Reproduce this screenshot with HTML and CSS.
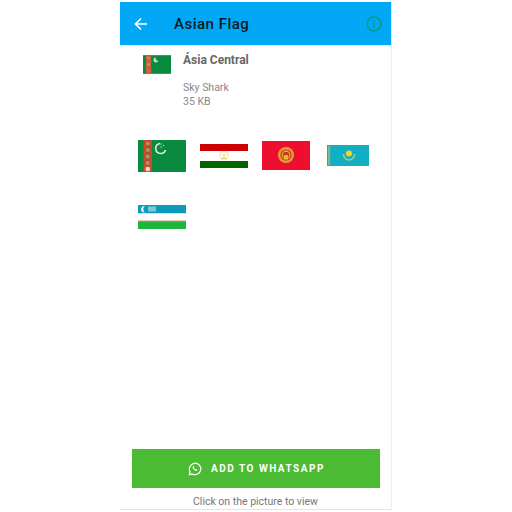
FILE: index.html
```html
<!DOCTYPE html>
<html lang="en">
<head>
    <meta charset="UTF-8">
    <meta name="viewport" content="width=device-width, initial-scale=1.0">
    <title>Asian Flag</title>
    <link rel="stylesheet" href="styles.css">
</head>
<body>
    <div class="phone">
        <header class="appbar">
            <svg class="back" viewBox="0 0 14 14" width="14" height="14">
                <path d="M13 7H2M7 1.5 1.5 7 7 12.5" fill="none" stroke="#fff" stroke-width="1.7"/>
            </svg>
            <h1 class="title">Asian Flag</h1>
            <svg class="info" viewBox="0 0 16 16" width="16" height="16">
                <circle cx="8" cy="8" r="6.9" fill="none" stroke="#0a9a8a" stroke-width="1.5"/>
                <rect x="7.2" y="7" width="1.6" height="4.8" fill="#0a9a8a"/>
                <rect x="7.2" y="4.2" width="1.6" height="1.6" fill="#0a9a8a"/>
            </svg>
        </header>

        <section class="pack">
            <svg class="pack-icon flag" viewBox="0 0 48 32" width="28" height="19">
                <rect width="48" height="32" fill="#0a8a3e"/>
                <rect x="5" width="9" height="32" fill="#c9603f"/>
                <circle cx="9.500" cy="5" r="2.500" fill="#b9975a"/>
                <circle cx="9.500" cy="16" r="2.500" fill="#b9975a"/>
                <circle cx="9.500" cy="27" r="2.500" fill="#f0554a"/>
                <path d="M22 3.500a4.500 4.500 0 1 0 4.500 6 5 5 0 0 1-2.500-.5 4.200 4.200 0 0 1-2-5.500z" fill="#bcdcc6"/>
            </svg>
            <div class="pack-text">
                <div class="pack-name">Ásia Central</div>
                <div class="pack-author">Sky Shark</div>
                <div class="pack-size">35 KB</div>
            </div>
        </section>

        <section class="flags">
            <div class="cell">
                <svg class="flag" viewBox="0 0 48 32" width="48" height="32">
                    <rect width="48" height="32" fill="#0a8a3e"/>
                    <rect x="5.500" width="8.500" height="32" fill="#d8452f"/>
                    <g fill="#a89a58" stroke="#7f3b28" stroke-width="0.600">
                        <circle cx="9.750" cy="3.500" r="2.600"/>
                        <circle cx="9.750" cy="10" r="2.600"/>
                        <circle cx="9.750" cy="16.500" r="2.600"/>
                        <circle cx="9.750" cy="23" r="2.600"/>
                    </g>
                    <circle cx="9.750" cy="29" r="2.300" fill="#efe0c8"/>
                    <path d="M22 3.500a5 5 0 1 0 5.500 6.500" fill="none" stroke="#e4f2e8" stroke-width="1.500"/>
                    <g fill="#9fd4b2">
                        <circle cx="23" cy="4" r="0.800"/>
                        <circle cx="25.500" cy="5.500" r="0.800"/>
                        <circle cx="23" cy="7" r="0.800"/>
                    </g>
                </svg>
            </div>
            <div class="cell">
                <svg class="flag" viewBox="0 0 48 24" width="48" height="24">
                    <rect width="48" height="7" fill="#cc0000"/>
                    <rect y="7" width="48" height="10" fill="#fff"/>
                    <rect y="17" width="48" height="7" fill="#006600"/>
                    <path d="M21 13.500h6v2h-6z" fill="#f3d469"/>
                    <path d="M19.500 14a4.600 5.500 0 1 1 9 0" fill="none" stroke="#f6e3a0" stroke-width="1.100"/>
                    <circle cx="24" cy="11" r="1.500" fill="#f6e3a0"/>
                </svg>
            </div>
            <div class="cell">
                <svg class="flag" viewBox="0 0 48 29" width="48" height="29">
                    <rect width="48" height="29" fill="#ee0f30"/>
                    <circle cx="24" cy="14" r="8" fill="#e0a030"/>
                    <circle cx="24" cy="14" r="5.600" fill="#c9342a"/>
                    <circle cx="24" cy="14" r="3.800" fill="none" stroke="#edb72c" stroke-width="1.200"/>
                    <path d="M22 14h4v4.500h-4z" fill="#edb72c"/>
                </svg>
            </div>
            <div class="cell">
                <svg class="flag" viewBox="0 0 42 21" width="42" height="21">
                    <rect width="42" height="21" fill="#12aec4"/>
                    <rect x="1" y="1" width="2.200" height="19" fill="#7dbb8a"/>
                    <circle cx="22" cy="8.500" r="3" fill="#f4d51e"/>
                    <path d="M16.500 9c0 4 3 6 5.500 6s5.500-2 5.500-6" fill="none" stroke="#a9cc78" stroke-width="1.500"/>
                </svg>
            </div>
            <div class="cell">
                <svg class="flag" viewBox="0 0 48 24" width="48" height="24">
                    <rect width="48" height="8.500" fill="#0d9bbd"/>
                    <rect y="8.500" width="48" height="7.500" fill="#fff"/>
                    <rect y="16" width="48" height="8" fill="#1db53c"/>
                    <rect y="15.500" width="48" height="1" fill="#d98a80"/>
                    <path d="M7 1a3.300 3.300 0 1 0 0 6.500 3.800 3.800 0 0 1 0-6.500z" fill="#fff"/>
                    <rect x="10" y="1.500" width="8" height="5" fill="#7cc6da"/>
                </svg>
            </div>
        </section>

        <footer class="actions">
            <button class="add-btn">
                <svg viewBox="0 0 14 14" width="14" height="14">
                    <path d="M1.300 12.700 2.100 9.700A5.700 5.700 0 1 1 4.300 11.900Z" fill="none" stroke="#fff" stroke-width="1.200"/>
                    <path d="M5 4.300c-.8.800-.5 2 .7 3.300 1.300 1.300 2.500 1.600 3.400.8l.3-.8-1.300-.7-.6.500c-.6-.2-1.200-.8-1.500-1.500l.5-.6-.7-1.300z" fill="#fff"/>
                </svg>
                <span>ADD TO WHATSAPP</span>
            </button>
            <p class="hint">Click on the picture to view</p>
        </footer>
    </div>
</body>
</html>
```

FILE: styles.css
```css
* {
    box-sizing: border-box;
}

body {
    margin: 0;
    height: 512px;
    overflow: hidden;
    background-color: #fff;
    font-family: Roboto, sans-serif;
}

.phone {
    display: flex;
    flex-direction: column;
    width: 272px;
    height: 508px;
    margin: 2px 0 0 120px;
    background-color: #fff;
    border-right: 1px solid #eee;
    border-bottom: 1px solid #e4e4e4;
}

.appbar {
    display: flex;
    align-items: center;
    flex-shrink: 0;
    height: 43px;
    padding: 0 9px 0 14px;
    background-color: #02a8f5;
    box-shadow: 0 1px 2px rgba(0, 0, 0, 0.12);
}

.title {
    flex: 1;
    margin: 0 0 0 26px;
    font-size: 15px;
    font-weight: 500;
    letter-spacing: 0.5px;
    color: #0c1a24;
}

.pack {
    display: flex;
    height: 80px;
    padding: 8px 0 0 23px;
}

.pack-icon {
    margin: 2px 12px 0 0;
}

.pack-name {
    font-size: 12px;
    font-weight: 700;
    line-height: 14px;
    color: #666;
}

.pack-author,
.pack-size {
    font-size: 10.5px;
    line-height: 14px;
    color: #888;
}

.pack-author {
    margin-top: 14px;
}

.flags {
    display: grid;
    grid-template-columns: repeat(4, 62px);
    grid-auto-rows: 61px;
    padding-left: 11px;
}

.cell {
    display: flex;
    align-items: center;
    justify-content: center;
}

.flag {
    filter: blur(0.35px);
}

.actions {
    display: flex;
    flex-direction: column;
    align-items: center;
    margin-top: auto;
}

.add-btn {
    display: flex;
    align-items: center;
    justify-content: center;
    gap: 9px;
    width: 248px;
    height: 39px;
    padding: 0 0 0 2px;
    border: none;
    background-color: #4abb32;
    color: #fff;
    font-family: Roboto, sans-serif;
    font-size: 10px;
    font-weight: 700;
    letter-spacing: 1.5px;
}

.hint {
    margin: 7px 0 1px;
    font-size: 10.5px;
    line-height: 13px;
    color: #777;
}
```
